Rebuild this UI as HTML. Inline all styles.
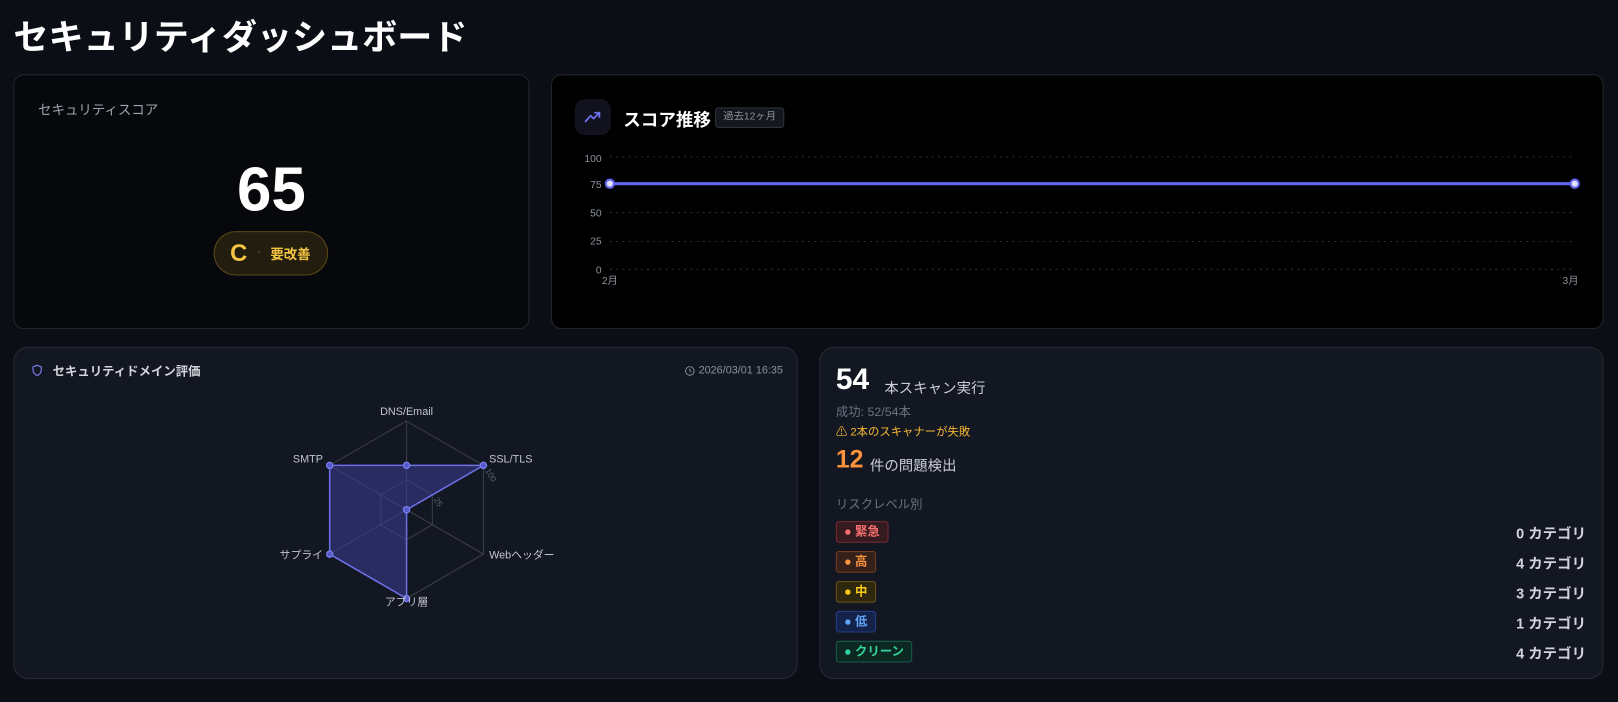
<!DOCTYPE html>
<html><head><meta charset="utf-8"><style>
*{box-sizing:border-box;margin:0;padding:0}
html,body{width:1618px;height:702px;overflow:hidden;background:#0b0e15}
body{font-family:"Liberation Sans","Noto Sans CJK JP",sans-serif;color:#e5e7eb}
#w{position:absolute;left:0;top:0;width:1568px;height:680px;transform:scale(1.0319);transform-origin:0 0}
.a{position:absolute;white-space:nowrap}
.card{position:absolute;border-radius:10px}
.t{background:#07080b;border:1px solid #22262e}
.b{background:#131722;border:1px solid #262a35;border-radius:14px}
.bd{position:absolute;left:810px;height:21px;border-radius:3px;font-size:12px;font-weight:bold;line-height:19px;padding:0 7px;border:1px solid}
.ct{position:absolute;right:31px;font-size:14px;font-weight:bold;color:#d1d5db}
</style></head><body><div id="w">
<div class="a" style="left:13px;top:9px;font-size:34px;font-weight:bold;color:#fff">セキュリティダッシュボード</div>

<div class="card t" style="left:13px;top:72px;width:500px;height:247px"></div>
<div class="a" style="left:37px;top:96px;font-size:13px;color:#9ca3af">セキュリティスコア</div>
<div class="a" style="left:183px;top:149px;width:160px;text-align:center;font-size:60px;font-weight:bold;color:#fff;line-height:70px">65</div>
<div class="a" style="left:207px;top:224px;width:111px;height:43px;border-radius:22px;background:#221d0e;border:1px solid #5a4818"></div>
<div class="a" style="left:223px;top:232px;font-size:23px;font-weight:bold;color:#f5c542">C</div>
<div class="a" style="left:249px;top:236px;font-size:12px;color:#8a7a4a">·</div>
<div class="a" style="left:262px;top:236px;font-size:13px;font-weight:bold;color:#f5c542">要改善</div>

<div class="card t" style="left:534px;top:72px;width:1020px;height:247px;background:#000"></div>
<div class="a" style="left:557px;top:96px;width:35px;height:35px;border-radius:10px;background:#11121d"></div>
<svg class="a" style="left:565px;top:105px" width="19" height="17" viewBox="0 0 24 24" fill="none" stroke="#6d6ff0" stroke-width="2.4" stroke-linecap="round" stroke-linejoin="round"><polyline points="2 18 9 10 13 14 21 6"/><polyline points="15 6 21 6 21 12"/></svg>
<div class="a" style="left:604px;top:102px;font-size:17px;font-weight:bold;color:#fff">スコア推移</div>
<div class="a" style="left:693px;top:104px;width:67px;height:20px;border:1px solid #2d333d;background:#14171d;border-radius:3px;font-size:10px;color:#8b929c;text-align:center;line-height:18px">過去12ヶ月</div>
<svg class="a" style="left:534px;top:140px" width="1020" height="145">
<g font-size="10" fill="#8b929c" text-anchor="end" font-family="Liberation Sans,sans-serif">
<text x="49" y="17">100</text><text x="49" y="42">75</text><text x="49" y="70">50</text><text x="49" y="97">25</text><text x="49" y="125">0</text></g>
<g stroke="#2a2e36" stroke-dasharray="2 4"><line x1="57" y1="12" x2="992" y2="12"/><line x1="57" y1="66" x2="992" y2="66"/><line x1="57" y1="94" x2="992" y2="94"/><line x1="57" y1="121" x2="992" y2="121"/></g>
<line x1="57" y1="38" x2="992" y2="38" stroke="#6366f1" stroke-width="3"/>
<circle cx="57" cy="38" r="4" fill="#dfe1ff" stroke="#6366f1" stroke-width="2"/>
<circle cx="992" cy="38" r="4" fill="#dfe1ff" stroke="#6366f1" stroke-width="2"/>
<g font-size="10" fill="#8b929c" text-anchor="middle" font-family="Liberation Sans,Noto Sans CJK JP,sans-serif"><text x="57" y="135">2月</text><text x="988" y="135">3月</text></g>
</svg>

<div class="card b" style="left:13px;top:336px;width:760px;height:322px"></div>
<svg class="a" style="left:30px;top:352px" width="12" height="14" viewBox="0 0 24 24" fill="none" stroke="#7c7ff0" stroke-width="2.2"><path d="M12 2l8 3v6c0 5-3.5 9-8 11-4.5-2-8-6-8-11V5z"/></svg>
<div class="a" style="left:51px;top:351px;font-size:12px;font-weight:bold;color:#d1d5db">セキュリティドメイン評価</div>
<svg class="a" style="left:663px;top:354px" width="11" height="11" viewBox="0 0 24 24" fill="none" stroke="#8b929c" stroke-width="2"><circle cx="12" cy="12" r="9"/><path d="M12 7v5l3 2"/></svg>
<div class="a" style="left:677px;top:353px;font-size:10.5px;color:#8b929c">2026/03/01 16:35</div>
<svg class="a" style="left:0;top:0" width="780" height="680" font-family="Liberation Sans,Noto Sans CJK JP,sans-serif">
<g fill="none" stroke="#3a3e48" stroke-width="1">
<polygon points="394,408 468.5,451 468.5,537 394,580 319.5,537 319.5,451"/>
<polygon points="394,465 419,479.5 419,508.5 394,523 369,508.5 369,479.5"/>
<line x1="394" y1="494" x2="394" y2="408"/><line x1="394" y1="494" x2="468.5" y2="451"/><line x1="394" y1="494" x2="468.5" y2="537"/><line x1="394" y1="494" x2="394" y2="580"/><line x1="394" y1="494" x2="319.5" y2="537"/><line x1="394" y1="494" x2="319.5" y2="451"/>
</g>
<polygon points="394,451 468.5,451 394,494 394,580 319.5,537 319.5,451" fill="#3b3e96" fill-opacity="0.55" stroke="#6b70e6" stroke-width="1.5"/>
<g fill="#5558c8" stroke="#7b80f0" stroke-width="1.2"><circle cx="394" cy="451" r="3"/><circle cx="468.5" cy="451" r="3"/><circle cx="394" cy="494" r="3"/><circle cx="394" cy="580" r="3"/><circle cx="319.5" cy="537" r="3"/><circle cx="319.5" cy="451" r="3"/></g>
<g font-size="10.5" fill="#c0c4cc"><text x="394" y="402" text-anchor="middle">DNS/Email</text><text x="474" y="448">SSL/TLS</text><text x="474" y="541">Webヘッダー</text><text x="394" y="587" text-anchor="middle">アプリ層</text><text x="313" y="541" text-anchor="end">サプライ</text><text x="313" y="448" text-anchor="end">SMTP</text></g>
<g font-size="8" fill="#5c6270"><text x="420" y="484" transform="rotate(60 420 484)">25</text><text x="470" y="456" transform="rotate(60 470 456)">100</text></g>
</svg>

<div class="card b" style="left:794px;top:336px;width:760px;height:322px"></div>
<div class="a" style="left:810px;top:352px;font-size:29px;font-weight:bold;color:#fff">54</div>
<div class="a" style="left:857px;top:366px;font-size:14px;color:#c9cdd4">本スキャン実行</div>
<div class="a" style="left:810px;top:390px;font-size:12px;color:#6b7280">成功: 52/54本</div>
<div class="a" style="left:810px;top:410px;font-size:11px;color:#f5b731">⚠ 2本のスキャナーが失敗</div>
<div class="a" style="left:810px;top:432px;font-size:24px;font-weight:bold;color:#fb923c">12</div>
<div class="a" style="left:843px;top:441px;font-size:14px;color:#c9cdd4">件の問題検出</div>
<div class="a" style="left:810px;top:480px;font-size:12px;color:#6b7280">リスクレベル別</div>
<div class="bd" style="top:505px;background:#351a20;border-color:#7a2a33;color:#f87171">● 緊急</div>
<div class="bd" style="top:534px;background:#35211a;border-color:#773a1f;color:#fb923c">● 高</div>
<div class="bd" style="top:563px;background:#30270f;border-color:#6b5416;color:#facc15">● 中</div>
<div class="bd" style="top:592px;background:#15224a;border-color:#233f8a;color:#60a5fa">● 低</div>
<div class="bd" style="top:621px;background:#0d2822;border-color:#155e4c;color:#34d399">● クリーン</div>
<div class="ct" style="top:507px">0 カテゴリ</div>
<div class="ct" style="top:536px">4 カテゴリ</div>
<div class="ct" style="top:565px">3 カテゴリ</div>
<div class="ct" style="top:594px">1 カテゴリ</div>
<div class="ct" style="top:623px">4 カテゴリ</div>
</div></body></html>
